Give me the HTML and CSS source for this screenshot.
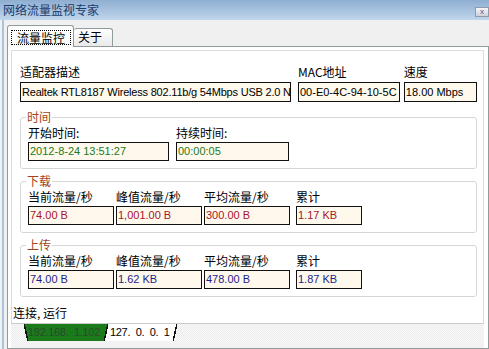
FILE: index.html
```html
<!DOCTYPE html>
<html lang="zh-CN">
<head>
    <meta charset="UTF-8">
    <meta name="viewport" content="width=device-width, initial-scale=1.0">
    <title>网络流量监视专家</title>
    <link rel="stylesheet" href="styles.css">
</head>
<body>
    <div class="window">
        <div class="titlebar">
            <span class="title">网络流量监视专家</span>
            <span class="close">x</span>
        </div>

        <div class="client">
            <div class="tabs">
                <div class="tab active"><span class="focus">流量监控</span></div>
                <div class="tab">关于</div>
            </div>

            <div class="panel">
                <div class="inner">
                    <div class="row top-row">
                        <div class="field w-adapter">
                            <div class="lbl">适配器描述</div>
                            <div class="val">Realtek RTL8187 Wireless 802.11b/g 54Mbps USB 2.0 N</div>
                        </div>
                        <div class="field w-mac">
                            <div class="lbl">MAC地址</div>
                            <div class="val">00-E0-4C-94-10-5C</div>
                        </div>
                        <div class="field w-speed">
                            <div class="lbl">速度</div>
                            <div class="val">18.00 Mbps</div>
                        </div>
                    </div>

                    <fieldset class="group time">
                        <legend>时间</legend>
                        <div class="row">
                            <div class="field w-start">
                                <div class="lbl">开始时间:</div>
                                <div class="val">2012-8-24 13:51:27</div>
                            </div>
                            <div class="field w-dur">
                                <div class="lbl">持续时间:</div>
                                <div class="val">00:00:05</div>
                            </div>
                        </div>
                    </fieldset>

                    <fieldset class="group down">
                        <legend>下载</legend>
                        <div class="row">
                            <div class="field w-rate">
                                <div class="lbl">当前流量/秒</div>
                                <div class="val">74.00 B</div>
                            </div>
                            <div class="field w-rate">
                                <div class="lbl">峰值流量/秒</div>
                                <div class="val">1,001.00 B</div>
                            </div>
                            <div class="field w-rate">
                                <div class="lbl">平均流量/秒</div>
                                <div class="val">300.00 B</div>
                            </div>
                            <div class="field w-total">
                                <div class="lbl">累计</div>
                                <div class="val">1.17 KB</div>
                            </div>
                        </div>
                    </fieldset>

                    <fieldset class="group up">
                        <legend>上传</legend>
                        <div class="row">
                            <div class="field w-rate">
                                <div class="lbl">当前流量/秒</div>
                                <div class="val">74.00 B</div>
                            </div>
                            <div class="field w-rate">
                                <div class="lbl">峰值流量/秒</div>
                                <div class="val">1.62 KB</div>
                            </div>
                            <div class="field w-rate">
                                <div class="lbl">平均流量/秒</div>
                                <div class="val">478.00 B</div>
                            </div>
                            <div class="field w-total">
                                <div class="lbl">累计</div>
                                <div class="val">1.87 KB</div>
                            </div>
                        </div>
                    </fieldset>

                    <div class="status">连接, 运行</div>
                </div>

                <div class="sheets">
                    <span class="sheet active">192.168.&nbsp;&nbsp;1.102</span>
                    <span class="sheet">127.&nbsp;&nbsp;0.&nbsp;&nbsp;0.&nbsp;&nbsp;1</span>
                </div>
            </div>
        </div>
    </div>
</body>
</html>
```

FILE: styles.css
```css
body {
    margin: 0;
    font-family: "Noto Sans CJK SC", "Liberation Sans", sans-serif;
    font-size: 12px;
    color: #000;
}

.window {
    width: 489px;
    height: 349px;
    background-color: #f0f0f0;
    overflow: hidden;
}

.titlebar {
    height: 20px;
    display: flex;
    justify-content: space-between;
    align-items: flex-start;
    background: linear-gradient(#8eaed1, #c0d6ec);
}

.title {
    padding-left: 3px;
    line-height: 20px;
    color: #1b3a6c;
}

.close {
    width: 12px;
    height: 8px;
    margin-top: 7px;
    border: 1px solid #8f9aab;
    background: linear-gradient(#f6f6f6, #cdd2da);
    font-family: "Liberation Sans", sans-serif;
    font-size: 8px;
    line-height: 7px;
    text-align: center;
    color: #574c9c;
}

.client {
    margin-left: 2px;
    border-left: 2px solid #abc2dd;
}

.tabs {
    height: 26px;
    display: flex;
    align-items: flex-end;
    padding-left: 3px;
}

.tab {
    box-sizing: border-box;
    border: 1px solid #919b9c;
    border-bottom: none;
    border-radius: 3px 3px 0 0;
}

.tab.active {
    position: relative;
    z-index: 1;
    height: 22px;
    margin-bottom: -1px;
    padding: 4px 2px 0 3px;
    background: linear-gradient(#ffffff, #fafaf8);
}

.tab.active .focus {
    display: block;
    border: 1px dotted #000;
    padding: 0 5px;
    line-height: 13px;
}

.tab:not(.active) {
    height: 18px;
    width: 39px;
    border-left: none;
    padding-left: 4px;
    line-height: 16px;
    background: linear-gradient(#ffffff, #e9e9e9);
}

.panel {
    box-sizing: border-box;
    width: 482px;
    height: 303px;
    margin-left: 3px;
    padding: 3px 4px 0 3px;
    border: 1px solid #919b9c;
    background-color: #fff;
}

.inner {
    box-sizing: border-box;
    height: 273px;
    display: flex;
    flex-direction: column;
    padding: 13px 6px 0 8px;
    border: 1px solid #dcdcdc;
    border-bottom: none;
}

.row {
    display: flex;
}

.field .lbl {
    line-height: 16px;
    white-space: nowrap;
}

.field .val {
    box-sizing: border-box;
    height: 19px;
    margin-top: 1px;
    padding-left: 1px;
    border: 1px solid #111;
    background-color: #fef9ec;
    font-family: "Liberation Sans", sans-serif;
    font-size: 11px;
    line-height: 17px;
    white-space: nowrap;
    overflow: hidden;
}

.top-row .val {
    height: 20px;
    margin-top: 2px;
    line-height: 18px;
}

.w-adapter { width: 271px; }
.w-adapter .val { letter-spacing: -0.2px; }
.w-mac { width: 103px; margin-left: 7px; }
.w-speed { width: 74px; margin-left: 4px; }

.w-start { width: 141px; }
.w-dur { width: 113px; margin-left: 7px; }

.w-rate { width: 86px; margin-right: 2px; }
.w-total { width: 66px; margin-left: 4px; }

.group {
    box-sizing: border-box;
    min-width: 0;
    width: 457px;
    margin: 5px 0 0 0;
    padding: 1px 7px 7px 7px;
    border: 1px solid #d6d6d6;
    border-radius: 3px;
}

.group.time {
    margin-top: 8px;
}

.group legend {
    margin-left: -2px;
    padding: 0 1px;
    line-height: 14px;
    color: #a3441d;
}

.time .val { color: #217a21; }
.down .val { color: #a8142c; }
.up .val { color: #1d1d8e; }

.status {
    margin-top: auto;
    margin-left: -7px;
    padding-bottom: 2px;
    line-height: 16px;
}

.sheets {
    height: 24px;
    display: flex;
    align-items: flex-start;
    padding-left: 13px;
    border-top: 1px solid #cbcbcb;
    background: repeating-conic-gradient(#ebebeb 0 25%, #fafafa 0 50%) 0 0 / 2px 2px;
}

.sheet {
    position: relative;
    z-index: 1;
    height: 17px;
    padding: 0 7px 0 6px;
    font-family: "Liberation Sans", sans-serif;
    font-size: 11px;
    letter-spacing: -0.3px;
    line-height: 17px;
    white-space: nowrap;
    color: #000;
}

.sheet::before {
    content: "";
    position: absolute;
    inset: 0;
    z-index: -1;
    background-color: #fff;
    clip-path: polygon(0 0, 100% 0, calc(100% - 4px) 100%, 0 100%);
}

.sheet::after {
    content: "";
    position: absolute;
    inset: 0;
    background: linear-gradient(to bottom right, transparent calc(50% - 0.75px), #111 0 calc(50% + 0.75px), transparent 0) right / 4px 100% no-repeat;
}

.sheet.active {
    z-index: 2;
    padding: 0 8px 0 4px;
    color: #2c4a2c;
}

.sheet.active::before {
    background-color: #1b7b1b;
    clip-path: polygon(0 0, 100% 0, calc(100% - 4px) 100%, 4px 100%);
}

.sheet.active::after {
    background:
        linear-gradient(to bottom left, transparent calc(50% - 0.75px), #111 0 calc(50% + 0.75px), transparent 0) left / 4px 100% no-repeat,
        linear-gradient(to bottom right, transparent calc(50% - 0.75px), #111 0 calc(50% + 0.75px), transparent 0) right / 4px 100% no-repeat;
}

.sheet.active + .sheet {
    margin-left: -4px;
}
```
